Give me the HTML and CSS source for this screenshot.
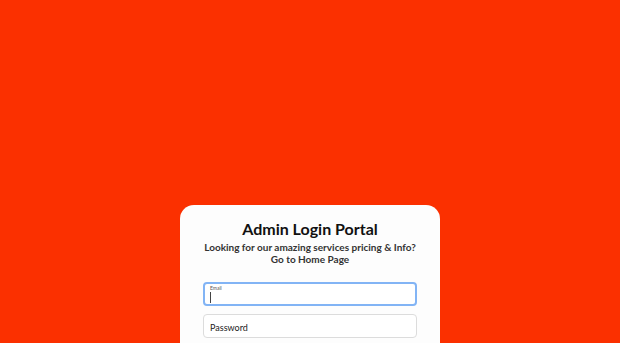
FILE: index.html
```html
<!DOCTYPE html>
<html lang="en">
  <head>
    <meta charset="UTF-8" />
    <meta name="viewport" content="width=device-width, initial-scale=1.0" />
    <title>Admin Login Portal</title>
    <link rel="stylesheet" href="styles.css">
  </head>
  <body>
    <div class="page">
      <div class="card">
        <h1>Admin Login Portal</h1>
        <p class="subtitle">
          Looking for our amazing services pricing &amp; Info?<br />
          <a href="#">Go to Home Page</a>
        </p>

        <div class="field field-active">
          <label for="email">Email</label>
          <span class="caret"></span>
          <input type="email" id="email" name="email" />
        </div>

        <div class="field">
          <input type="password" id="password" name="password" placeholder="Password" />
        </div>
      </div>
    </div>
  </body>
</html>
```

FILE: styles.css
```css
body {
  font-family: Lato, "Open Sans", sans-serif;
  margin: 0;
  padding: 0;
  background-color: #fb3000;
  overflow: hidden;
}

.page {
  height: 343px;
  display: flex;
  justify-content: center;
  padding-top: 205px;
  box-sizing: border-box;
  overflow: hidden;
}

.card {
  width: 260px;
  background-color: #fdfdfd;
  border-radius: 14px 14px 0 0;
  padding: 14px 23px 0;
  box-sizing: border-box;
}

h1 {
  font-size: 16px;
  font-weight: 700;
  color: #111;
  text-align: center;
  margin: 0 0 2px;
  line-height: 20px;
}

.subtitle {
  font-size: 10px;
  font-weight: 700;
  color: #333;
  text-align: center;
  white-space: nowrap;
  margin: 0 0 17px;
  line-height: 12px;
}

.subtitle a {
  color: #333;
  text-decoration: none;
}

.field {
  position: relative;
  height: 24px;
  border: 1px solid #dcdcdc;
  border-radius: 4px;
  margin-bottom: 8px;
  background: #fff;
  box-sizing: border-box;
}

.field input {
  width: 100%;
  height: 100%;
  border: none;
  background: transparent;
  padding: 0 6px;
  box-sizing: border-box;
  font-family: Lato, sans-serif;
  font-size: 9px;
  outline: none;
}

.field input::placeholder {
  color: #222;
  font-weight: 400;
}

.field-active {
  border: 2px solid #82b4f5;
}

.field-active label {
  position: absolute;
  left: 5px;
  top: 1px;
  font-size: 5px;
  color: #555;
}

.caret {
  position: absolute;
  left: 5px;
  top: 8px;
  width: 1px;
  height: 11px;
  background: #444;
}
```
